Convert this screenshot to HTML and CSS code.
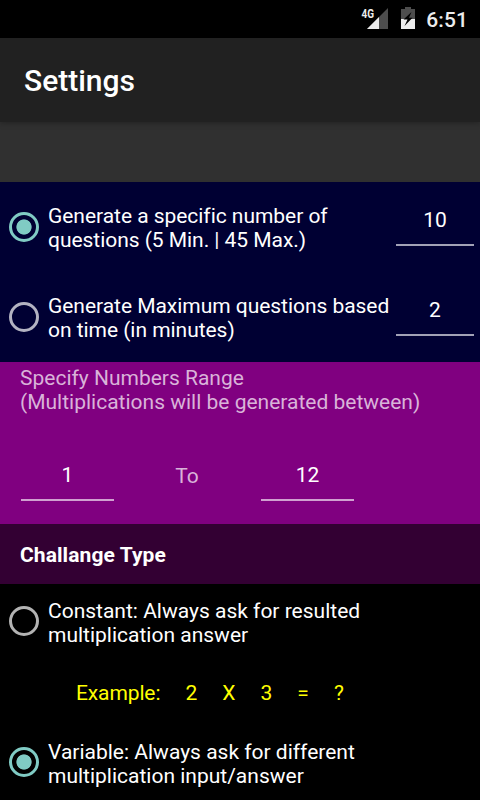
FILE: index.html
```html
<!DOCTYPE html>
<html lang="en">
<head>
  <meta charset="UTF-8">
  <meta name="viewport" content="width=device-width, initial-scale=1.0">
  <title>Settings</title>
  <link rel="stylesheet" href="styles.css">
</head>
<body>

  <div class="status">
    <svg class="signal" width="27" height="22" viewBox="0 0 27 22">
      <path d="M27 0V21H6Z" fill="#4d4d4d"/>
      <path d="M18 9V21H6Z" fill="#ececec"/>
      <text x="0.500" y="9.500" textLength="12.500" lengthAdjust="spacingAndGlyphs">4G</text>
    </svg>
    <svg class="battery" width="14" height="22" viewBox="0 0 14 22">
      <path d="M4 0H10V2H14V12H0V2H4Z" fill="#4d4d4d"/>
      <path d="M0 12H14V22H0Z" fill="#ececec"/>
      <path d="M10.500 5L2.500 12.500H6.500L3.500 19L11.500 10.800H8Z" fill="#000"/>
    </svg>
    <span class="clock">6:51</span>
  </div>

  <h1 class="title">Settings</h1>
  <div class="blank"></div>

  <div class="amount">
    <div class="row">
      <i class="radio active"></i>
      <p>Generate a specific number of<br>questions (5 Min. | 45 Max.)</p>
      <span class="field">10</span>
    </div>
    <div class="row">
      <i class="radio"></i>
      <p>Generate Maximum questions based<br>on time (in minutes)</p>
      <span class="field">2</span>
    </div>
  </div>

  <div class="range">
    <p>Specify Numbers Range<br>(Multiplications will be generated between)</p>
    <div class="between">
      <span class="field">1</span>
      <span class="to">To</span>
      <span class="field">12</span>
    </div>
  </div>

  <h2 class="heading">Challange Type</h2>

  <div class="type">
    <div class="row">
      <i class="radio"></i>
      <p>Constant: Always ask for resulted<br>multiplication answer</p>
    </div>
    <p class="example">Example:     2     X     3     =     ?</p>
    <div class="row">
      <i class="radio active"></i>
      <p>Variable: Always ask for different<br>multiplication input/answer</p>
    </div>
  </div>

</body>
</html>
```
FILE: styles.css
```css
* {
  margin: 0;
  padding: 0;
  box-sizing: border-box;
}

body {
  height: 800px;
  overflow: hidden;
  font-family: Roboto, "Liberation Sans", sans-serif;
  font-size: 21px;
  line-height: 24px;
  color: #fff;
  background-color: #000;
}

.status {
  height: 38px;
  padding: 8px 12px 0 0;
  display: flex;
  justify-content: flex-end;
  align-items: flex-start;
}

.signal {
  margin-right: 13px;
}

.signal text {
  font-size: 12px;
  font-weight: 700;
  fill: #ececec;
}

.battery {
  margin: -1px 11px 0 0;
}

.clock {
  font-weight: 500;
  letter-spacing: .1px;
  color: #ececec;
}

.title {
  position: relative;
  height: 84px;
  padding-left: 24px;
  font-size: 30px;
  font-weight: 500;
  line-height: 86px;
  background-color: #212121;
  box-shadow: 0 1px 6px rgba(0, 0, 0, .3);
}

.blank {
  height: 60px;
  background-color: #303030;
}

.amount {
  position: relative;
  background-color: #000033;
}

.row {
  display: flex;
  padding-left: 9px;
}

.row p {
  flex: 1;
  margin-left: 9px;
  white-space: nowrap;
}

.amount .row {
  height: 90px;
  padding-top: 22px;
  padding-right: 6px;
}

.amount p {
  letter-spacing: -.04px;
}

.radio {
  width: 30px;
  height: 30px;
  margin-top: 8px;
  border: 3px solid #b3b3b3;
  border-radius: 50%;
}

.amount .radio {
  border-color: #b3b3c2;
}

.radio.active,
.amount .radio.active {
  border-color: #80cbc4;
  background: radial-gradient(circle, #80cbc4 7.2px, transparent 8px);
}

.field {
  height: 38px;
  border-bottom: 2px solid #d0a0d0;
  text-align: center;
}

.amount .field {
  width: 78px;
  margin-top: 4px;
  border-color: #a2a2b6;
}

.range {
  height: 162px;
  padding: 4px 20px 0;
  color: #d9b3d9;
  background-color: #800080;
}

.between {
  display: flex;
  margin: 49px 0 0 1px;
}

.between .field {
  width: 93px;
  color: #fff;
}

.to {
  width: 147px;
  padding: 1px 1px 0 0;
  text-align: center;
}

.heading {
  height: 60px;
  padding-left: 20px;
  font-size: 21px;
  font-weight: 700;
  line-height: 62px;
  letter-spacing: .08px;
  background-color: #330033;
}

.type {
  padding-top: 15px;
}

.type .radio {
  margin-top: 7px;
}

.example {
  margin: 34px 0 35px 76px;
  white-space: pre;
  letter-spacing: -.12px;
  word-spacing: -.06px;
  color: #ff0;
}
```
